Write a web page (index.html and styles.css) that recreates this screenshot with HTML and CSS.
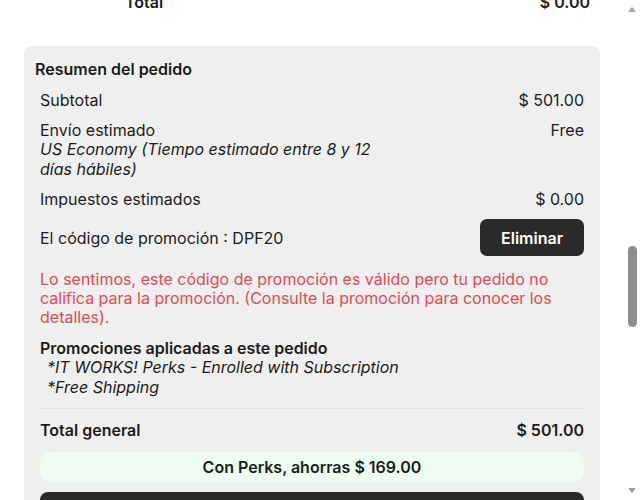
FILE: index.html
```html
<!DOCTYPE html>
<html lang="es">
<head>
    <meta charset="UTF-8">
    <meta name="viewport" content="width=device-width, initial-scale=1.0">
    <title>Resumen del pedido</title>
    <link rel="stylesheet" href="styles.css">
</head>
<body>
    <div class="page">
        <div class="prev-total">
            <span>Total</span>
            <span>$ 0.00</span>
        </div>

        <div class="summary-card">
            <h2 class="summary-title">Resumen del pedido</h2>

            <div class="summary-row">
                <span>Subtotal</span>
                <span>$ 501.00</span>
            </div>

            <div class="summary-row">
                <div class="shipping">
                    <div>Envío estimado</div>
                    <div class="shipping-note">US Economy (Tiempo estimado entre 8 y 12 días hábiles)</div>
                </div>
                <span>Free</span>
            </div>

            <div class="summary-row">
                <span>Impuestos estimados</span>
                <span>$ 0.00</span>
            </div>

            <div class="summary-row promo-row">
                <span>El código de promoción : DPF20</span>
                <button class="btn-remove">Eliminar</button>
            </div>

            <p class="promo-error">Lo sentimos, este código de promoción es válido pero tu pedido no califica para la promoción. (Consulte la promoción para conocer los detalles).</p>

            <div class="applied">
                <div class="applied-title">Promociones aplicadas a este pedido</div>
                <div class="applied-item">*IT WORKS! Perks - Enrolled with Subscription</div>
                <div class="applied-item">*Free Shipping</div>
            </div>

            <div class="summary-row grand-total">
                <span>Total general</span>
                <span>$ 501.00</span>
            </div>

            <div class="savings">Con Perks, ahorras $ 169.00</div>

            <div class="checkout-btn"></div>
        </div>
    </div>

    <!-- fake window scrollbar -->
    <div class="scrollbar">
        <span class="arrow arrow-up"></span>
        <span class="thumb"></span>
        <span class="arrow arrow-down"></span>
    </div>
</body>
</html>
```

FILE: styles.css
```css
* {
    margin: 0;
    padding: 0;
    box-sizing: border-box;
}

body {
    font-family: 'Inter', 'Roboto', sans-serif;
    font-size: 16px;
    line-height: 20px;
    color: #1c1c1c;
    background: #fff;
    overflow: hidden;
    height: 500px;
}

.page {
    width: 640px;
}

.prev-total {
    display: flex;
    justify-content: space-between;
    margin-top: -8px;
    padding: 0 50px 0 125px;
    font-weight: 600;
}

.summary-card {
    margin: 34px 40px 0 24px;
    background: #efefef;
    border-radius: 8px 8px 0 0;
    padding: 13px 16px 0 11px;
}

.summary-title {
    font-size: 16px;
    font-weight: 600;
    line-height: 20px;
    margin-bottom: 11px;
}

.summary-row {
    display: flex;
    justify-content: space-between;
    align-items: flex-start;
    padding-left: 5px;
    margin-bottom: 10px;
}

.shipping {
    max-width: 345px;
}

.shipping-note {
    font-style: italic;
    line-height: 19.5px;
}

.promo-row {
    align-items: center;
    margin-bottom: 0;
}

.btn-remove {
    width: 104px;
    height: 37px;
    background: #2a2a2a;
    color: #fff;
    border: none;
    border-radius: 7px;
    font-family: 'Inter', sans-serif;
    font-size: 16px;
    font-weight: 600;
    cursor: pointer;
}

.promo-error {
    color: #e24a51;
    line-height: 19px;
    padding-left: 5px;
    margin-top: 14px;
}

.applied {
    margin: 12px 0 0 5px;
    padding-bottom: 11px;
    border-bottom: 1px solid #e2e2e2;
}

.applied-title {
    font-weight: 600;
    line-height: 19px;
}

.applied-item {
    font-style: italic;
    line-height: 19.5px;
    padding-left: 7px;
}

.grand-total {
    font-weight: 600;
    margin-top: 11px;
    margin-bottom: 12px;
}

.savings {
    margin-left: 5px;
    height: 30px;
    line-height: 30px;
    background: #eefcf1;
    border-radius: 10px;
    text-align: center;
    font-weight: 600;
}

.checkout-btn {
    margin: 10px 0 0 5px;
    height: 40px;
    background: #2a2a2a;
    border-radius: 8px 8px 0 0;
}

/* window scrollbar */
.scrollbar {
    position: fixed;
    top: 0;
    right: 0;
    width: 15px;
    height: 500px;
    background: #fff;
}

.arrow {
    position: absolute;
    left: 3px;
    width: 0;
    height: 0;
    border-left: 4px solid transparent;
    border-right: 4px solid transparent;
}

.arrow-up {
    top: 7px;
    border-bottom: 5px solid #a3a3a3;
}

.arrow-down {
    bottom: 7px;
    border-top: 5px solid #a3a3a3;
}

.thumb {
    position: absolute;
    top: 246px;
    left: 3px;
    width: 9px;
    height: 81px;
    background: #8d8d8d;
    border-radius: 5px;
}
```
